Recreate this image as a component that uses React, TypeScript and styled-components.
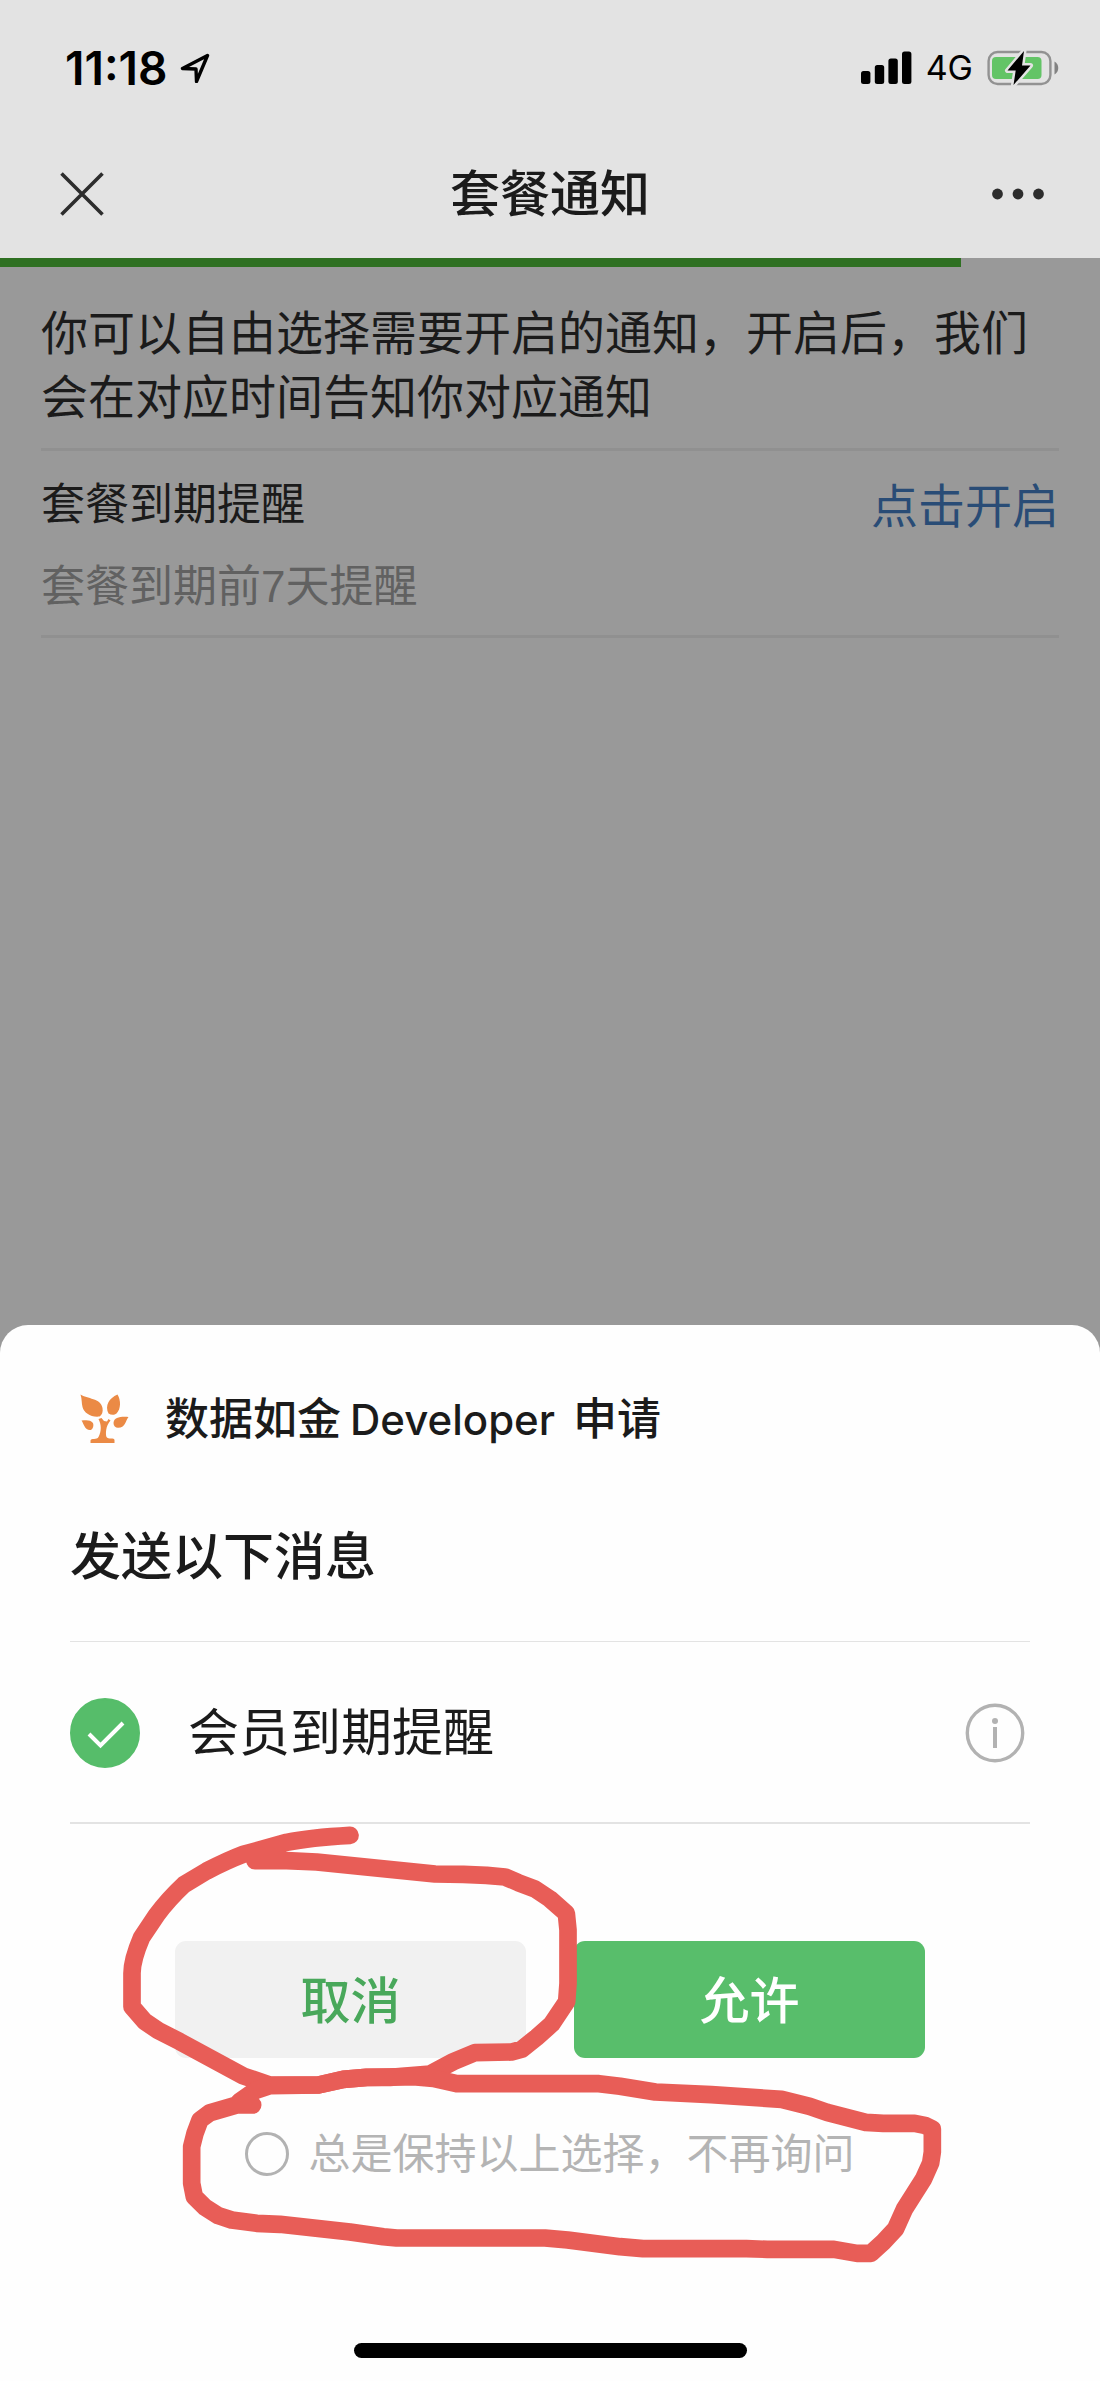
import React, { useState } from "react";
import styled, { createGlobalStyle } from "styled-components";

const systemFont = `"Liberation Sans", "Noto Sans CJK SC", sans-serif`;
const uiFont = `Inter, "Noto Sans CJK SC", sans-serif`;

const GlobalStyle = createGlobalStyle`
  *, *::before, *::after { box-sizing: border-box; }
  body { margin: 0; background: #999999; }
  h1, h2, p { margin: 0; font-weight: inherit; font-size: inherit; }
  button { font: inherit; border: 0; padding: 0; background: none; cursor: pointer; }
`;

const Page = styled.div`
  display: flex;
  flex-direction: column;
  min-height: 100vh;
  font-family: ${systemFont};
  color: #1b1b1b;
  background: #999999;
`;

const Header = styled.header`
  background: #e3e3e3;
  font-family: ${uiFont};
`;

const StatusBar = styled.div`
  display: flex;
  align-items: center;
  justify-content: space-between;
  padding: 44px 41px 38px 65px;
  line-height: 48px;
  color: #000;
`;

const StatusGroup = styled.div<{ $gap: number }>`
  display: flex;
  align-items: center;
  gap: ${(p) => p.$gap}px;
  height: 48px;
`;

const Clock = styled.time`
  font-size: 46px;
  font-weight: 600;
`;

const Network = styled.span`
  font-size: 34px;
  font-weight: 400;
`;

const NavBar = styled.nav`
  display: grid;
  grid-template-columns: 1fr auto 1fr;
  align-items: center;
  height: 128px;
  padding: 0 55px;
`;

const IconButton = styled.button<{ $end?: boolean }>`
  display: grid;
  place-items: center;
  width: 54px;
  height: 54px;
  justify-self: ${(p) => (p.$end ? "end" : "start")};
`;

const Title = styled.h1`
  font-size: 50px;
  line-height: 70px;
  font-weight: 500;
`;

const ProgressTrack = styled.div`
  height: 9px;
`;

const ProgressFill = styled.div`
  height: 100%;
  background: #2f7022;
`;

const Content = styled.main`
  flex: 1;
  padding: 0 41px;
`;

const Intro = styled.p`
  padding: 35px 0 18px;
  border-bottom: 3px solid #909090;
  font-size: 47px;
  line-height: 64px;
`;

const Notice = styled.section`
  display: flex;
  align-items: flex-start;
  justify-content: space-between;
  padding: 24px 0 18px;
  border-bottom: 3px solid #909090;
`;

const NoticeText = styled.div`
  display: grid;
  gap: 22px;
  font-size: 44px;
  line-height: 60px;
`;

const NoticeHint = styled.p`
  color: #616161;
`;

const EnableLink = styled.a`
  font-size: 47px;
  line-height: 64px;
  color: #294c76;
  text-decoration: none;
`;

const Sheet = styled.section`
  padding: 64px 70px 23px;
  border-radius: 28px 28px 0 0;
  background: #fefefe;
  font-family: ${uiFont};
`;

const Brand = styled.div`
  display: flex;
  align-items: center;
  gap: 25px;
  height: 60px;
`;

const LogoBox = styled.span`
  display: grid;
  place-items: center;
  width: 70px;
`;

const BrandName = styled.p`
  display: flex;
  align-items: baseline;
  gap: 9px;
  font-size: 44px;
  line-height: 60px;
  font-weight: 500;
`;

const BrandLatin = styled.span`
  padding-right: 9px;
  font-size: 42px;
`;

const SheetTitle = styled.h2`
  padding: 73px 0 49px;
  border-bottom: 1px solid #e3e3e3;
  font-size: 51px;
  line-height: 70px;
  font-weight: 500;
`;

const MessageRow = styled.div`
  display: flex;
  align-items: center;
  justify-content: space-between;
  padding: 56px 5px 54px 0;
  border-bottom: 2px solid #e3e3e3;
`;

const MessageLabel = styled.label`
  display: flex;
  align-items: center;
  gap: 48px;
  font-size: 51px;
  line-height: 70px;
`;

const CheckBox = styled.span`
  display: grid;
  width: 70px;
  height: 70px;

  & > * {
    grid-area: 1 / 1;
  }
`;

const CheckInput = styled.input`
  appearance: none;
  width: 70px;
  height: 70px;
  margin: 0;
  border: 2px solid #b2b2b2;
  border-radius: 50%;

  &:checked {
    border-color: #56bd6a;
    background: #56bd6a;
  }
`;

const CheckMark = styled.svg`
  pointer-events: none;
`;

const InfoButton = styled.button`
  display: flex;
`;

const Actions = styled.div`
  position: relative;
  display: flex;
  flex-direction: column;
  align-items: center;
  padding: 117px 0 159px;
`;

const ButtonRow = styled.div`
  display: flex;
  gap: 48px;
  width: 750px;
  max-width: 100%;
`;

const ActionButton = styled.button<{ $primary?: boolean }>`
  && {
    flex: 1;
    height: 117px;
    padding-top: 2px;
    border-radius: 11px;
    font-size: 50px;
    font-weight: 500;
    line-height: 70px;
    color: ${(p) => (p.$primary ? "#ffffff" : "#49a85b")};
    background: ${(p) => (p.$primary ? "#58be6b" : "#f1f1f1")};
  }
`;

const RememberLabel = styled.label`
  display: flex;
  align-items: center;
  gap: 19px;
  margin-top: 66px;
  font-size: 42px;
  line-height: 60px;
  color: #b4b4b4;
`;

const RememberInput = styled.input`
  appearance: none;
  width: 44px;
  height: 44px;
  margin: 0;
  border: 3px solid #b2b2b2;
  border-radius: 50%;

  &:checked {
    background: #56bd6a;
    border-color: #56bd6a;
  }
`;

const Markup = styled.svg`
  position: absolute;
  top: 0;
  left: 50%;
  margin-left: -450px;
  pointer-events: none;
`;

const HomeIndicator = styled.div`
  width: 393px;
  height: 15px;
  margin: 0 auto;
  border-radius: 8px;
  background: #000;
`;

const LocationIcon = () => (
  <svg width="30" height="30" viewBox="0 0 30 30" fill="none" stroke="#000" strokeWidth="3.4" strokeLinejoin="round">
    <path d="M27.5 2.5 L2.5 15.5 L16 16 L16.5 28.5 Z" />
  </svg>
);

const SignalIcon = () => (
  <svg width="51" height="34" viewBox="0 0 51 34">
    <rect x="0" y="20" width="9.4" height="13" rx="2.5" />
    <rect x="13.8" y="14" width="9.4" height="19" rx="2.5" />
    <rect x="27.4" y="7.5" width="9.4" height="25.5" rx="2.5" />
    <rect x="41" y="0.5" width="9.4" height="32.5" rx="2.5" />
  </svg>
);

const BatteryIcon = () => (
  <svg width="72" height="36" viewBox="0 0 72 36">
    <rect x="1.6" y="2" width="61.8" height="32" rx="9" fill="none" stroke="#929292" strokeWidth="2.4" />
    <path d="M67.5 11.5 C72.5 14 72.5 22 67.5 24.5 Z" fill="#828282" />
    <rect x="5" y="7" width="49.5" height="22" rx="4" fill="#63c466" />
    <path
      d="M37 1 L20.5 20.5 L28.7 20.5 L26.5 35 L43.5 15.5 L35 15.5 Z"
      fill="#000"
      stroke="#e3e3e3"
      strokeWidth="5"
      strokeLinejoin="round"
      paintOrder="stroke"
    />
  </svg>
);

const CloseIcon = () => (
  <svg width="44" height="44" viewBox="0 0 44 44" stroke="#2d2d2d" strokeWidth="3.6">
    <path d="M1.5 1.5 L42.5 42.5 M42.5 1.5 L1.5 42.5" />
  </svg>
);

const MoreIcon = () => (
  <svg width="54" height="12" viewBox="0 0 54 12" fill="#2d2d2d">
    <circle cx="6.5" cy="6" r="5.4" />
    <circle cx="27" cy="6" r="5.4" />
    <circle cx="47.5" cy="6" r="5.4" />
  </svg>
);

const TreeLogo = () => (
  <svg width="50" height="50" viewBox="0 0 50 50" fill="#eb8a45">
    <path d="M0.5 0.5 C7 5 21 4 22.5 14 C23.2 18 22 21 19.500 22.500 C11 23.500 4 19 2.500 13 C1.500 9 2 5 0.500 0.500 Z" />
    <path d="M37.500 0.500 C41 6 41 15 36.500 19.500 C34 21.500 31 21 28.500 19.500 C24.500 12 29 4 37.500 0.500 Z" />
    <path d="M1.500 26.500 C6 26 10.500 25.500 13 29 C14 31.500 13 34.500 11 36 C5 37 4 30 1.500 26.500 Z" />
    <path d="M48.500 23 C41 22.500 34 23 33.500 29 C33.500 32 35.500 33.800 38 33.800 C45 34 45.500 27 48.500 23 Z" />
    <path d="M18.500 25 L21.500 24 L24 27 L27 27.500 L28.500 25 L30.500 26.500 C25.500 32 25.500 40 26.500 43 C28 45.500 34.500 43.500 34.500 46 L34.500 49 L10.500 49 L10.500 46.500 C11 44 17 46 18.500 43 C21.500 37 21.500 31 18.500 25 Z" />
  </svg>
);

const InfoIcon = () => (
  <svg width="60" height="60" viewBox="0 0 60 60">
    <circle cx="30" cy="30" r="27.700" fill="none" stroke="#b2b2b2" strokeWidth="3.400" />
    <circle cx="30" cy="18" r="3" fill="#b2b2b2" />
    <rect x="28" y="24" width="4" height="21" fill="#b2b2b2" />
  </svg>
);

const cancelStroke =
  "M750 106 Q630 113 560 127 Q500 144 430 163 Q385 180 320 213 L252 254 Q205 298 170 345 L125 412 Q96 480 96 520 L96 620 L135 665 L175 692 L240 725 L430 828 L510 855 L655 855 L730 838 L800 832 L870 832 L990 822 L1060 785 L1125 758 L1235 756 L1265 748 L1310 712 L1355 672 L1400 605 L1404 550 L1404 390 L1399 340 L1350 297 L1305 267 L1255 248 L1215 231 L1160 226 L1090 223 L1005 222 L650 186 L560 182 L465 182";

const rememberStroke =
  "M458 915 L410 915 L330 938 L300 960 L285 1000 L275 1040 L275 1150 L283 1190 L315 1222 L355 1247 L395 1260 L470 1270 L540 1273 L750 1296 L850 1310 L890 1314 L1335 1314 L1403 1320 L1560 1340 L1629 1346 L1939 1346 L2002 1348 L2202 1348 L2271 1360 L2313 1360 L2350 1326 L2387 1286 L2413 1228 L2471 1136 L2492 1089 L2497 1056 L2497 987 L2474 976 L2444 970 L2350 970 L2297 967 L2181 937 L2129 919 L2045 898 L1834 884 L1666 876 L1560 859 L1497 851 L1070 851 L1000 835 L940 830 L800 832 L730 838 L655 855 L510 857 L465 872 L418 905";

export default function App() {
  const [checked, setChecked] = useState(true);
  const [remember, setRemember] = useState(false);
  const progress = 87.4;

  return (
    <Page lang="zh-CN">
      <GlobalStyle />
      <Header>
        <StatusBar>
          <StatusGroup $gap={13}>
            <Clock>11:18</Clock>
            <LocationIcon />
          </StatusGroup>
          <StatusGroup $gap={14}>
            <SignalIcon />
            <Network>4G</Network>
            <BatteryIcon />
          </StatusGroup>
        </StatusBar>
        <NavBar>
          <IconButton type="button" aria-label="关闭">
            <CloseIcon />
          </IconButton>
          <Title>套餐通知</Title>
          <IconButton type="button" aria-label="更多" $end>
            <MoreIcon />
          </IconButton>
        </NavBar>
      </Header>
      <ProgressTrack>
        <ProgressFill style={{ width: `${progress}%` }} />
      </ProgressTrack>

      <Content>
        <Intro>你可以自由选择需要开启的通知，开启后，我们会在对应时间告知你对应通知</Intro>
        <Notice>
          <NoticeText>
            <h2>套餐到期提醒</h2>
            <NoticeHint>套餐到期前7天提醒</NoticeHint>
          </NoticeText>
          <EnableLink href="#enable">点击开启</EnableLink>
        </Notice>
      </Content>

      <Sheet role="dialog" aria-labelledby="sheet-title">
        <Brand>
          <LogoBox>
            <TreeLogo />
          </LogoBox>
          <BrandName>
            <span>数据如金</span>
            <BrandLatin>Developer</BrandLatin>
            <span>申请</span>
          </BrandName>
        </Brand>
        <SheetTitle id="sheet-title">发送以下消息</SheetTitle>
        <MessageRow>
          <MessageLabel>
            <CheckBox>
              <CheckInput type="checkbox" checked={checked} onChange={(e) => setChecked(e.target.checked)} />
              {checked && (
                <CheckMark width="70" height="70" viewBox="0 0 70 70" fill="none" stroke="#fff" strokeWidth="4">
                  <path d="M19 36 L30.500 47.500 L53 25" />
                </CheckMark>
              )}
            </CheckBox>
            会员到期提醒
          </MessageLabel>
          <InfoButton type="button" aria-label="详情">
            <InfoIcon />
          </InfoButton>
        </MessageRow>

        <Actions>
          <ButtonRow>
            <ActionButton type="button">取消</ActionButton>
            <ActionButton type="button" $primary>
              允许
            </ActionButton>
          </ButtonRow>
          <RememberLabel>
            <RememberInput type="checkbox" checked={remember} onChange={(e) => setRemember(e.target.checked)} />
            总是保持以上选择，不再询问
          </RememberLabel>
          <Markup
            width="900"
            height="460"
            viewBox="0 72 2700 1380"
            fill="none"
            stroke="#e85d57"
            strokeWidth="53"
            strokeLinecap="round"
            strokeLinejoin="round"
            aria-hidden="true"
          >
            <path d={cancelStroke} />
            <path d={rememberStroke} />
          </Markup>
        </Actions>
        <HomeIndicator />
      </Sheet>
    </Page>
  );
}
